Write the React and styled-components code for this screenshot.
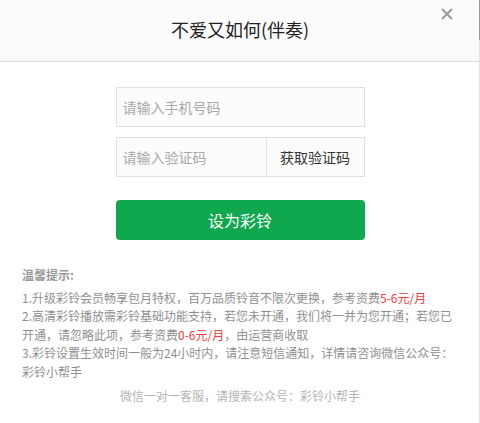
import React from "react";
import styled, { createGlobalStyle } from "styled-components";

const GlobalStyle = createGlobalStyle`
  html, body {
    margin: 0;
    padding: 0;
    background: #fff;
  }
  body {
    font-family: "Noto Sans CJK SC", "Liberation Sans", sans-serif;
    width: 480px;
    height: 423px;
    overflow: hidden;
  }
  * {
    box-sizing: border-box;
  }
`;

const Dialog = styled.div`
  position: relative;
  width: 480px;
  height: 423px;
  background: #fff;
  display: flex;
  flex-direction: column;
`;

const Header = styled.div`
  height: 62px;
  background: #fbfbfb;
  border-bottom: 1px solid #dcdcdc;
  display: flex;
  align-items: center;
  justify-content: center;
  padding-bottom: 3px;
`;

const Title = styled.h1`
  margin: 0;
  font-size: 18px;
  font-weight: 400;
  color: #222;
`;

const Close = styled.button`
  position: absolute;
  top: 8px;
  left: 441px;
  width: 12px;
  height: 12px;
  padding: 0;
  border: 0;
  background: none;
  cursor: pointer;
  display: flex;
`;

const ScrollBar = styled.div`
  position: absolute;
  top: 0;
  right: 0;
  width: 1px;
  height: 100%;
  background: #e2e2e2;
  &::before {
    content: "";
    display: block;
    height: 40px;
    background: #9a9a9a;
  }
`;

const Form = styled.div`
  width: 249px;
  margin: 25px auto 0;
  display: flex;
  flex-direction: column;
`;

const Field = styled.div`
  height: 40px;
  display: flex;
  border: 1px solid #e0e0e0;
  background: #fcfcfc;
  margin-bottom: ${({ gap }) => gap}px;
`;

const Input = styled.input`
  flex: 1;
  min-width: 0;
  border: 0;
  outline: none;
  background: transparent;
  padding: 0 6px;
  font-family: inherit;
  font-size: 14px;
  color: #333;
  &::placeholder {
    color: #a8a8a8;
  }
`;

const CodeButton = styled.button`
  width: 98px;
  border: 0;
  border-left: 1px solid #e0e0e0;
  background: transparent;
  font-family: inherit;
  font-size: 14px;
  color: #333;
  padding: 0;
  cursor: pointer;
`;

const Submit = styled.button`
  height: 40px;
  border: 0;
  border-radius: 4px;
  background: #10a84f;
  color: #fff;
  font-family: inherit;
  font-size: 16px;
  cursor: pointer;
`;

const Tips = styled.div`
  padding: 26px 22px 0;
  font-size: 12px;
  line-height: 18.5px;
  color: #8f8f8f;
`;

const TipsTitle = styled.div`
  font-weight: 700;
  color: #999;
  margin-bottom: 4px;
`;

const TipLine = styled.p`
  margin: 0;
`;

const Red = styled.span`
  color: #f23b3b;
`;

const Keep = styled.span`
  white-space: nowrap;
`;

const Footer = styled.div`
  margin-top: 6px;
  text-align: center;
  font-size: 12px;
  line-height: 18px;
  color: #b4b4b4;
`;

export default function App() {
  return (
    <>
      <GlobalStyle />
      <Dialog>
        <Header>
          <Title>不爱又如何(伴奏)</Title>
        </Header>
        <Close aria-label="关闭">
          <svg width="12" height="12" viewBox="0 0 12 12">
            <path d="M1 1L11 11M11 1L1 11" stroke="#9a9a9a" strokeWidth="2" />
          </svg>
        </Close>
        <ScrollBar />

        <Form>
          <Field gap={10}>
            <Input placeholder="请输入手机号码" />
          </Field>
          <Field gap={23}>
            <Input placeholder="请输入验证码" />
            <CodeButton>获取验证码</CodeButton>
          </Field>
          <Submit>设为彩铃</Submit>
        </Form>

        <Tips>
          <TipsTitle>温馨提示:</TipsTitle>
          <TipLine>
            1.升级彩铃会员畅享包月特权，百万品质铃音不限次更换，参考资费<Red>5-6元/月</Red>
          </TipLine>
          <TipLine>
            2.高清彩铃播放需彩铃基础功能支持，若您未开通，我们将一并为您开通；若您已开通，请忽略此项，参考资费<Red>0-6元/月</Red>，由运营商收取
          </TipLine>
          <TipLine>
            3.彩铃设置生效时间一般为24小时内，请注意短信通知，详情请咨询微信公众号：<Keep>彩铃小帮手</Keep>
          </TipLine>
        </Tips>

        <Footer>微信一对一客服，请搜索公众号：彩铃小帮手</Footer>
      </Dialog>
    </>
  );
}
